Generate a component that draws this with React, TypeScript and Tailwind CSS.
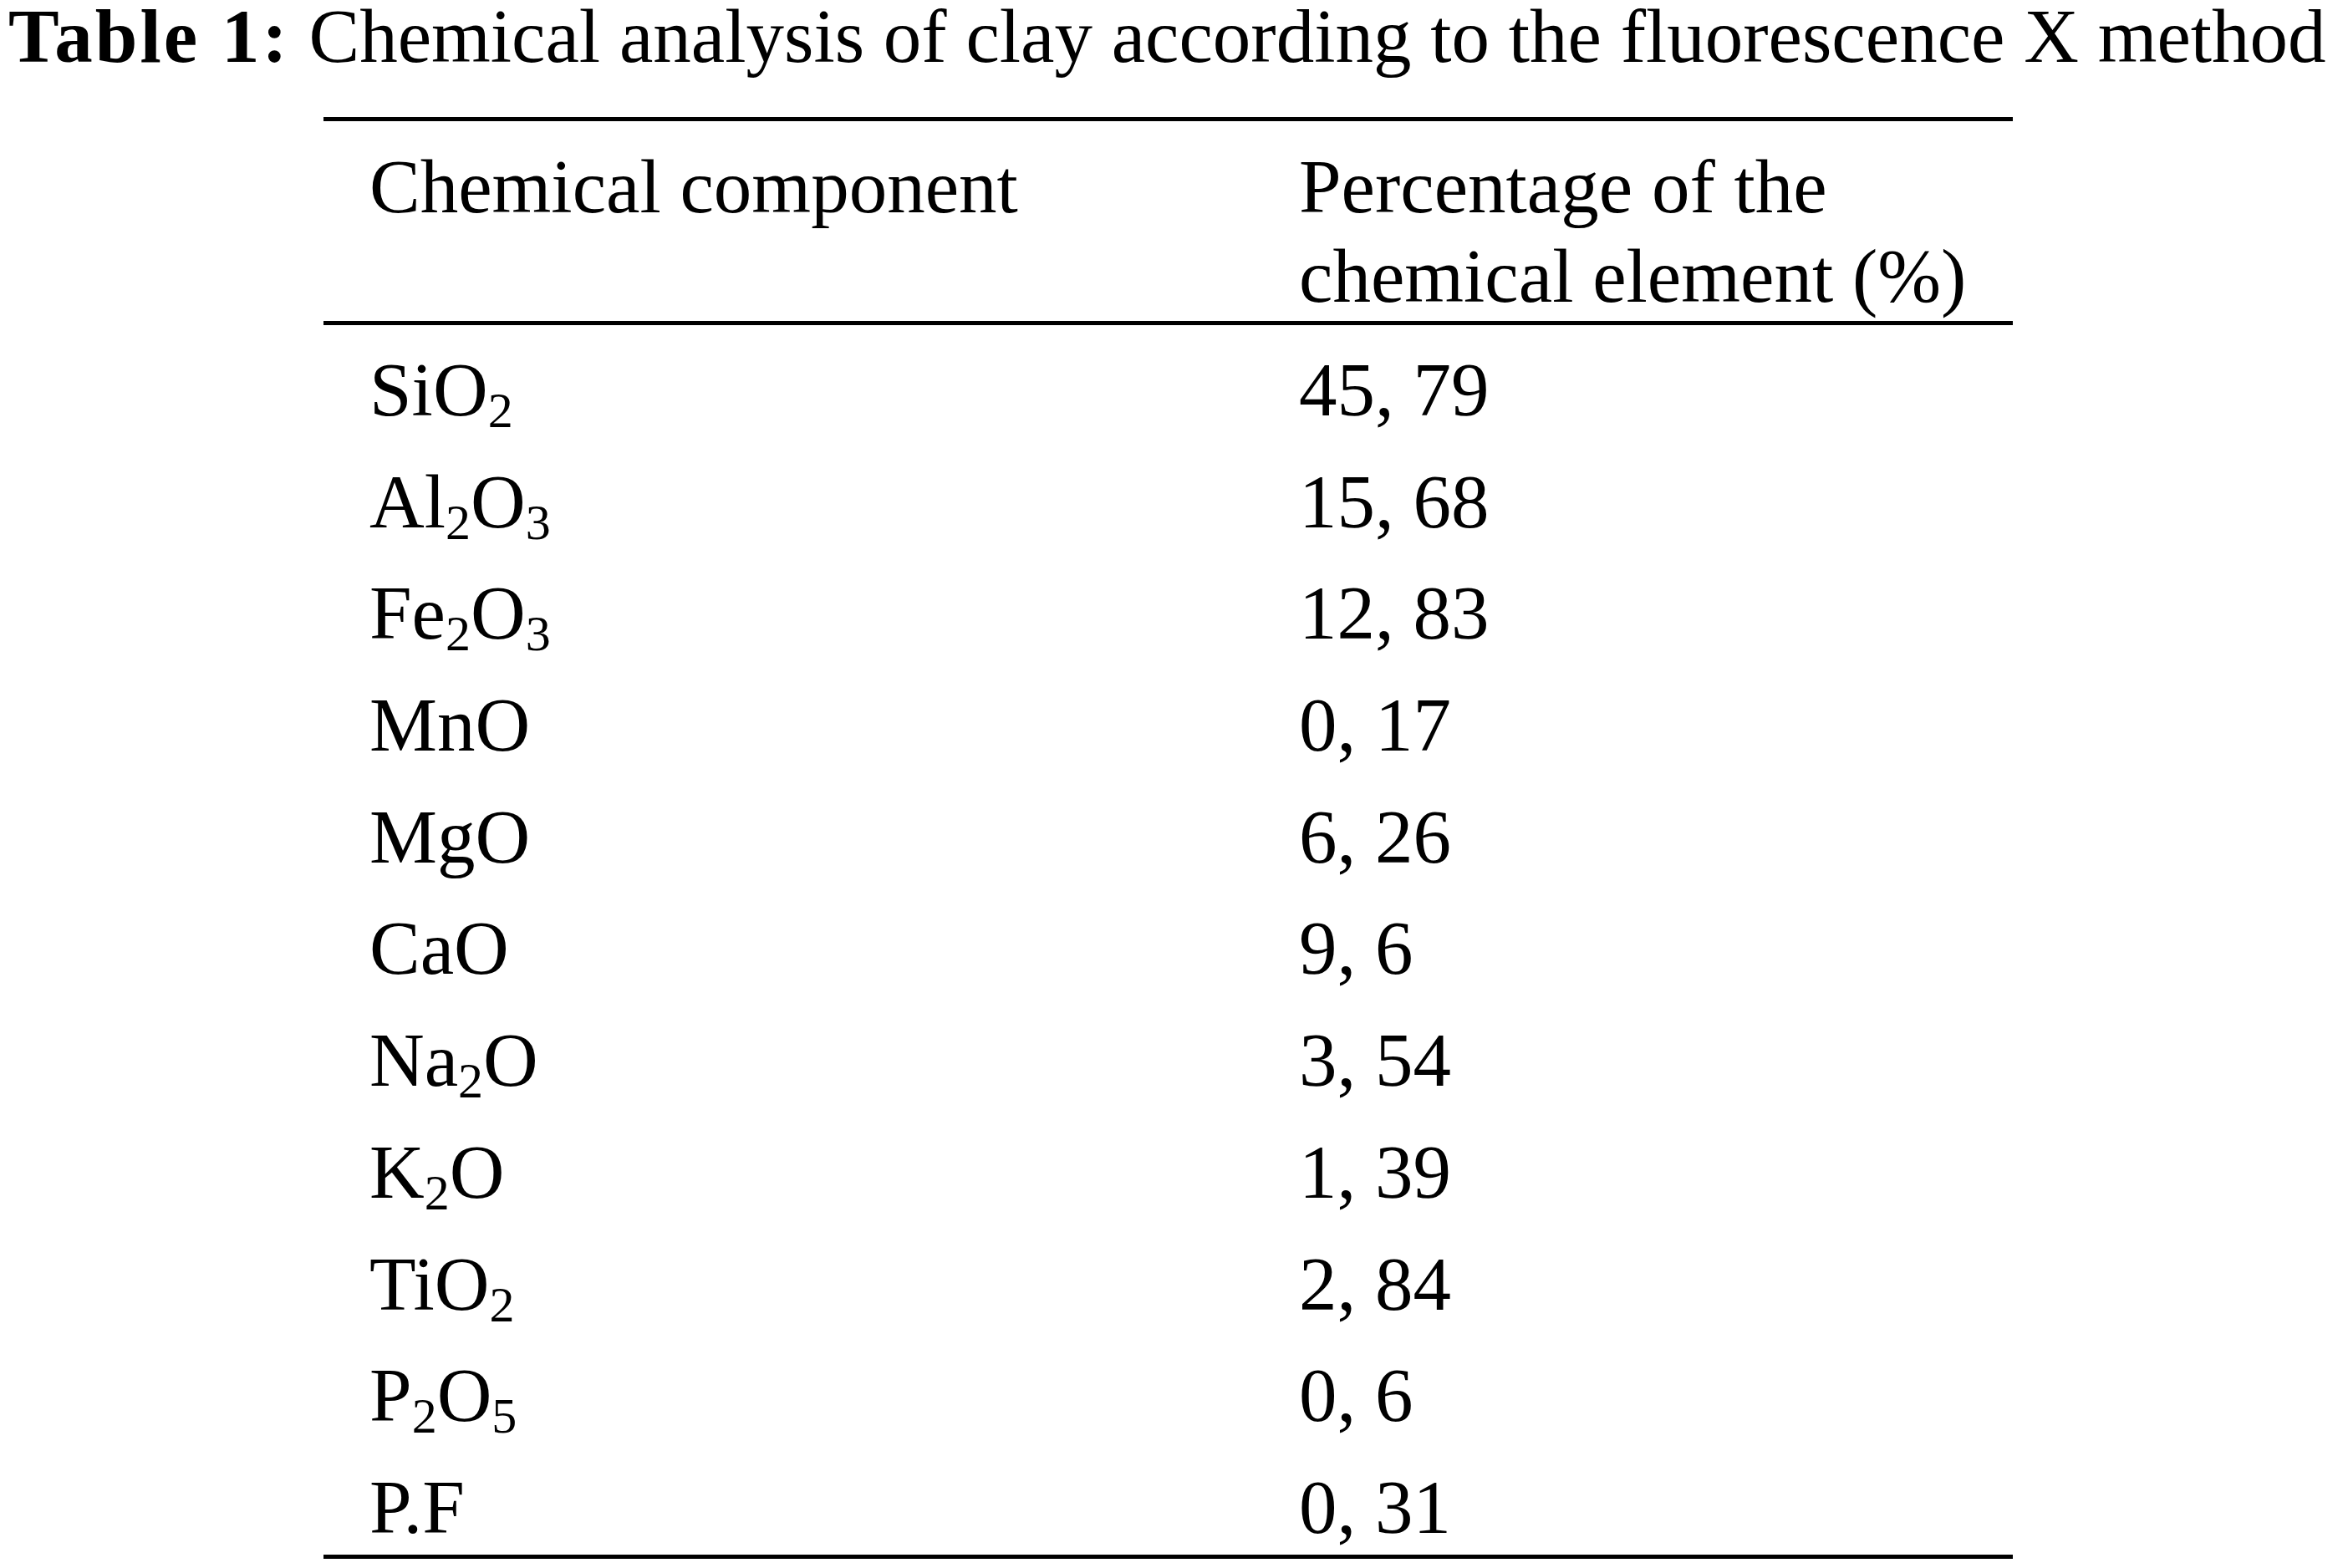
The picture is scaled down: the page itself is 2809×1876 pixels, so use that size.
import React from "react";

type Row = {
  formula: React.ReactNode;
  value: string;
};

const Sub: React.FC<{ children: React.ReactNode }> = ({ children }) => (
  <span className="relative top-[14px] text-[60px] leading-none">{children}</span>
);

const rows: Row[] = [
  { formula: <>SiO<Sub>2</Sub></>, value: "45, 79" },
  { formula: <>Al<Sub>2</Sub>O<Sub>3</Sub></>, value: "15, 68" },
  { formula: <>Fe<Sub>2</Sub>O<Sub>3</Sub></>, value: "12, 83" },
  { formula: <>MnO</>, value: "0, 17" },
  { formula: <>MgO</>, value: "6, 26" },
  { formula: <>CaO</>, value: "9, 6" },
  { formula: <>Na<Sub>2</Sub>O</>, value: "3, 54" },
  { formula: <>K<Sub>2</Sub>O</>, value: "1, 39" },
  { formula: <>TiO<Sub>2</Sub></>, value: "2, 84" },
  { formula: <>P<Sub>2</Sub>O<Sub>5</Sub></>, value: "0, 6" },
  { formula: <>P.F</>, value: "0, 31" },
];

const App: React.FC = () => {
  return (
    <div className="min-h-screen bg-white text-black font-['Liberation_Serif','Times_New_Roman',serif]">
      <h1 className="pl-[10px] pt-[2px] text-[91px] leading-[83px] font-normal whitespace-nowrap">
        <span className="font-bold tracking-[3px]">Table 1:</span>{" "}
        Chemical analysis of clay according to the fluorescence X method
      </h1>

      <table className="ml-[387px] mt-[55px] w-[2021px] border-separate border-spacing-0 border-t-[5px] border-b-[5px] border-black text-[91px]">
        <thead>
          <tr>
            <th className="w-[1112px] border-b-[5px] border-black pl-[55px] pt-[25px] text-left align-top font-normal leading-[107px]">
              Chemical component
            </th>
            <th className="border-b-[5px] border-black pl-[55px] pt-[25px] text-left align-top font-normal leading-[107px]">
              Percentage of the
              <br />
              chemical element (%)
            </th>
          </tr>
        </thead>
        <tbody>
          {rows.map((row, i) => (
            <tr key={i}>
              <td className="h-[133.7px] pl-[55px] pt-[32px] pb-[10.7px] align-top leading-[91px] whitespace-nowrap">
                {row.formula}
              </td>
              <td className="h-[133.7px] pl-[55px] pt-[32px] pb-[10.7px] align-top leading-[91px] whitespace-nowrap">
                {row.value}
              </td>
            </tr>
          ))}
        </tbody>
      </table>
    </div>
  );
};

export default App;
